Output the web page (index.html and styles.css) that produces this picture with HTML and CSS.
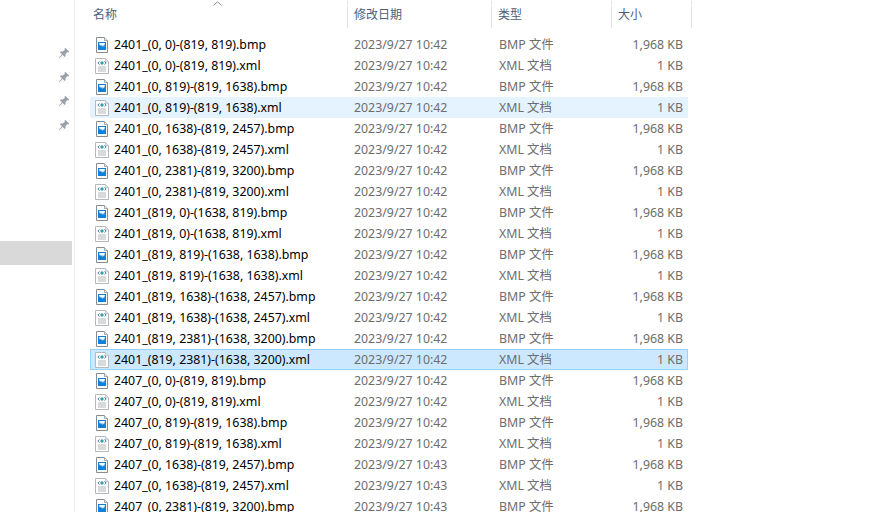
FILE: index.html
```html
<!DOCTYPE html>
<html>
  <head>
    <title>File list</title>
    <link rel="stylesheet" href="styles.css">
  </head>

  <body>
    <svg class="defs" width="0" height="0">
      <symbol id="bmp" viewBox="0 0 16 16">
        <path d="M2.5 .5H10.5L13.5 3.5V15.5H2.5Z" fill="#fff" stroke="#878c92" />
        <path d="M10.5 .5V3.5H13.5" fill="#e8eaec" stroke="#a5a9ad" />
        <rect x="4" y="5" width="8" height="8" fill="#0f7fdc" />
        <path d="M5 6H11L10 9.5 9 8 8.2 10 7 7.5 6 9Z" fill="#fff" />
      </symbol>
      <symbol id="xml" viewBox="0 0 16 16">
        <path d="M1.5 .5H11.5L14.5 3.5V15.5H1.5Z" fill="#fff" stroke="#b4b8bc" />
        <path d="M11.5 .5V3.5H14.5" fill="#eceef0" stroke="#c6c9cc" />
        <path d="M5.5 3.5 3.8 5 5.5 6.5M10.5 3.5 12.2 5 10.5 6.5" fill="none" stroke="#5c7f95" />
        <circle cx="8" cy="5" r="1.7" fill="#2f9fb8" />
        <path d="M4 9H12M4 11H12M4 13H12" stroke="#b0b4b8" />
      </symbol>
      <symbol id="pin" viewBox="0 0 12 12">
        <path d="M7.2 .8 11.2 4.6 10.2 5.4 9.4 5 7.4 7.2 7.6 9.2 6.6 10 4.8 8 1.2 11.2 .8 10.8 4 7.2 2 5.4 2.8 4.4 4.8 4.6 7 2.6 6.6 1.6Z" fill="#98a1a9" />
      </symbol>
    </svg>

    <div class="window">
      <aside class="sidebar">
        <div class="pins">
          <div class="pin-row"><svg class="pin"><use href="#pin" /></svg></div>
          <div class="pin-row"><svg class="pin"><use href="#pin" /></svg></div>
          <div class="pin-row"><svg class="pin"><use href="#pin" /></svg></div>
          <div class="pin-row"><svg class="pin"><use href="#pin" /></svg></div>
        </div>
        <div class="side-active"></div>
      </aside>

      <main class="files">
        <div class="list-header">
          <div class="head-cell head-name">名称<svg class="sort" viewBox="0 0 9 5"><path d="M.5 4.5 4.5 .7 8.5 4.5" fill="none" stroke="#8a8f96" /></svg></div>
          <div class="head-cell head-date">修改日期</div>
          <div class="head-cell head-type">类型</div>
          <div class="head-cell head-size">大小</div>
        </div>

        <div class="rows">
          <div class="row"><svg class="icon"><use href="#bmp" /></svg><span class="name">2401_(0, 0)-(819, 819).bmp</span><span class="date">2023/9/27 10:42</span><span class="type">BMP 文件</span><span class="size">1,968 KB</span></div>
          <div class="row"><svg class="icon"><use href="#xml" /></svg><span class="name">2401_(0, 0)-(819, 819).xml</span><span class="date">2023/9/27 10:42</span><span class="type">XML 文档</span><span class="size">1 KB</span></div>
          <div class="row"><svg class="icon"><use href="#bmp" /></svg><span class="name">2401_(0, 819)-(819, 1638).bmp</span><span class="date">2023/9/27 10:42</span><span class="type">BMP 文件</span><span class="size">1,968 KB</span></div>
          <div class="row row-hover"><svg class="icon"><use href="#xml" /></svg><span class="name">2401_(0, 819)-(819, 1638).xml</span><span class="date">2023/9/27 10:42</span><span class="type">XML 文档</span><span class="size">1 KB</span></div>
          <div class="row"><svg class="icon"><use href="#bmp" /></svg><span class="name">2401_(0, 1638)-(819, 2457).bmp</span><span class="date">2023/9/27 10:42</span><span class="type">BMP 文件</span><span class="size">1,968 KB</span></div>
          <div class="row"><svg class="icon"><use href="#xml" /></svg><span class="name">2401_(0, 1638)-(819, 2457).xml</span><span class="date">2023/9/27 10:42</span><span class="type">XML 文档</span><span class="size">1 KB</span></div>
          <div class="row"><svg class="icon"><use href="#bmp" /></svg><span class="name">2401_(0, 2381)-(819, 3200).bmp</span><span class="date">2023/9/27 10:42</span><span class="type">BMP 文件</span><span class="size">1,968 KB</span></div>
          <div class="row"><svg class="icon"><use href="#xml" /></svg><span class="name">2401_(0, 2381)-(819, 3200).xml</span><span class="date">2023/9/27 10:42</span><span class="type">XML 文档</span><span class="size">1 KB</span></div>
          <div class="row"><svg class="icon"><use href="#bmp" /></svg><span class="name">2401_(819, 0)-(1638, 819).bmp</span><span class="date">2023/9/27 10:42</span><span class="type">BMP 文件</span><span class="size">1,968 KB</span></div>
          <div class="row"><svg class="icon"><use href="#xml" /></svg><span class="name">2401_(819, 0)-(1638, 819).xml</span><span class="date">2023/9/27 10:42</span><span class="type">XML 文档</span><span class="size">1 KB</span></div>
          <div class="row"><svg class="icon"><use href="#bmp" /></svg><span class="name">2401_(819, 819)-(1638, 1638).bmp</span><span class="date">2023/9/27 10:42</span><span class="type">BMP 文件</span><span class="size">1,968 KB</span></div>
          <div class="row"><svg class="icon"><use href="#xml" /></svg><span class="name">2401_(819, 819)-(1638, 1638).xml</span><span class="date">2023/9/27 10:42</span><span class="type">XML 文档</span><span class="size">1 KB</span></div>
          <div class="row"><svg class="icon"><use href="#bmp" /></svg><span class="name">2401_(819, 1638)-(1638, 2457).bmp</span><span class="date">2023/9/27 10:42</span><span class="type">BMP 文件</span><span class="size">1,968 KB</span></div>
          <div class="row"><svg class="icon"><use href="#xml" /></svg><span class="name">2401_(819, 1638)-(1638, 2457).xml</span><span class="date">2023/9/27 10:42</span><span class="type">XML 文档</span><span class="size">1 KB</span></div>
          <div class="row"><svg class="icon"><use href="#bmp" /></svg><span class="name">2401_(819, 2381)-(1638, 3200).bmp</span><span class="date">2023/9/27 10:42</span><span class="type">BMP 文件</span><span class="size">1,968 KB</span></div>
          <div class="row row-selected"><svg class="icon"><use href="#xml" /></svg><span class="name">2401_(819, 2381)-(1638, 3200).xml</span><span class="date">2023/9/27 10:42</span><span class="type">XML 文档</span><span class="size">1 KB</span></div>
          <div class="row"><svg class="icon"><use href="#bmp" /></svg><span class="name">2407_(0, 0)-(819, 819).bmp</span><span class="date">2023/9/27 10:42</span><span class="type">BMP 文件</span><span class="size">1,968 KB</span></div>
          <div class="row"><svg class="icon"><use href="#xml" /></svg><span class="name">2407_(0, 0)-(819, 819).xml</span><span class="date">2023/9/27 10:42</span><span class="type">XML 文档</span><span class="size">1 KB</span></div>
          <div class="row"><svg class="icon"><use href="#bmp" /></svg><span class="name">2407_(0, 819)-(819, 1638).bmp</span><span class="date">2023/9/27 10:42</span><span class="type">BMP 文件</span><span class="size">1,968 KB</span></div>
          <div class="row"><svg class="icon"><use href="#xml" /></svg><span class="name">2407_(0, 819)-(819, 1638).xml</span><span class="date">2023/9/27 10:42</span><span class="type">XML 文档</span><span class="size">1 KB</span></div>
          <div class="row"><svg class="icon"><use href="#bmp" /></svg><span class="name">2407_(0, 1638)-(819, 2457).bmp</span><span class="date">2023/9/27 10:43</span><span class="type">BMP 文件</span><span class="size">1,968 KB</span></div>
          <div class="row"><svg class="icon"><use href="#xml" /></svg><span class="name">2407_(0, 1638)-(819, 2457).xml</span><span class="date">2023/9/27 10:43</span><span class="type">XML 文档</span><span class="size">1 KB</span></div>
          <div class="row"><svg class="icon"><use href="#bmp" /></svg><span class="name">2407_(0, 2381)-(819, 3200).bmp</span><span class="date">2023/9/27 10:43</span><span class="type">BMP 文件</span><span class="size">1,968 KB</span></div>
        </div>
      </main>
    </div>
  </body>
</html>
```

FILE: styles.css
```css
body {
  margin: 0;
  background: #fff;
  font-family: "Noto Sans", "Noto Sans CJK SC", sans-serif;
  font-size: 12px;
  color: #6d6d6d;
}

.defs {
  display: block;
  height: 0;
}

.window {
  display: flex;
  height: 512px;
  overflow: hidden;
}

.sidebar {
  box-sizing: border-box;
  width: 75px;
  flex-shrink: 0;
  padding-top: 41px;
  border-right: 1px solid #eeeeee;
}

.pin-row {
  display: flex;
  justify-content: flex-end;
  align-items: center;
  height: 24px;
  padding-right: 4px;
}

.pin {
  width: 12px;
  height: 12px;
}

.side-active {
  height: 24px;
  width: 72px;
  margin-top: 104px;
  background: #d9d9d9;
}

.files {
  flex: 1;
  min-width: 0;
}

.list-header {
  display: flex;
  height: 27px;
  margin-top: 1px;
  margin-bottom: 6px;
  color: #4c607a;
}

.head-cell {
  box-sizing: border-box;
  display: flex;
  align-items: center;
  position: relative;
  border-right: 1px solid #e5e5e5;
  padding-bottom: 2px;
}

.head-name {
  width: 273px;
  padding-left: 18px;
}

.head-date {
  width: 144px;
  padding-left: 6px;
}

.head-type {
  width: 120px;
  padding-left: 6px;
}

.head-size {
  width: 80px;
  padding-left: 6px;
}

.sort {
  position: absolute;
  left: 138px;
  top: 0;
  width: 9px;
  height: 5px;
}

.rows {
  margin-left: 15px;
  width: 598px;
}

.row {
  box-sizing: border-box;
  display: grid;
  grid-template-columns: 23px 240px 145px 1fr 70px;
  align-items: center;
  height: 21px;
  padding-right: 4px;
  border: 1px solid transparent;
  font-size: 12.35px;
  line-height: 16px;
  white-space: nowrap;
}

.row-hover {
  background: #e5f3ff;
  border-color: #e5f3ff;
}

.row-selected {
  background: #cce8ff;
  border-color: #99d1ff;
}

.icon {
  width: 16px;
  height: 16px;
  margin-left: 3px;
}

.name {
  color: #000;
}

.size {
  text-align: right;
}
```
